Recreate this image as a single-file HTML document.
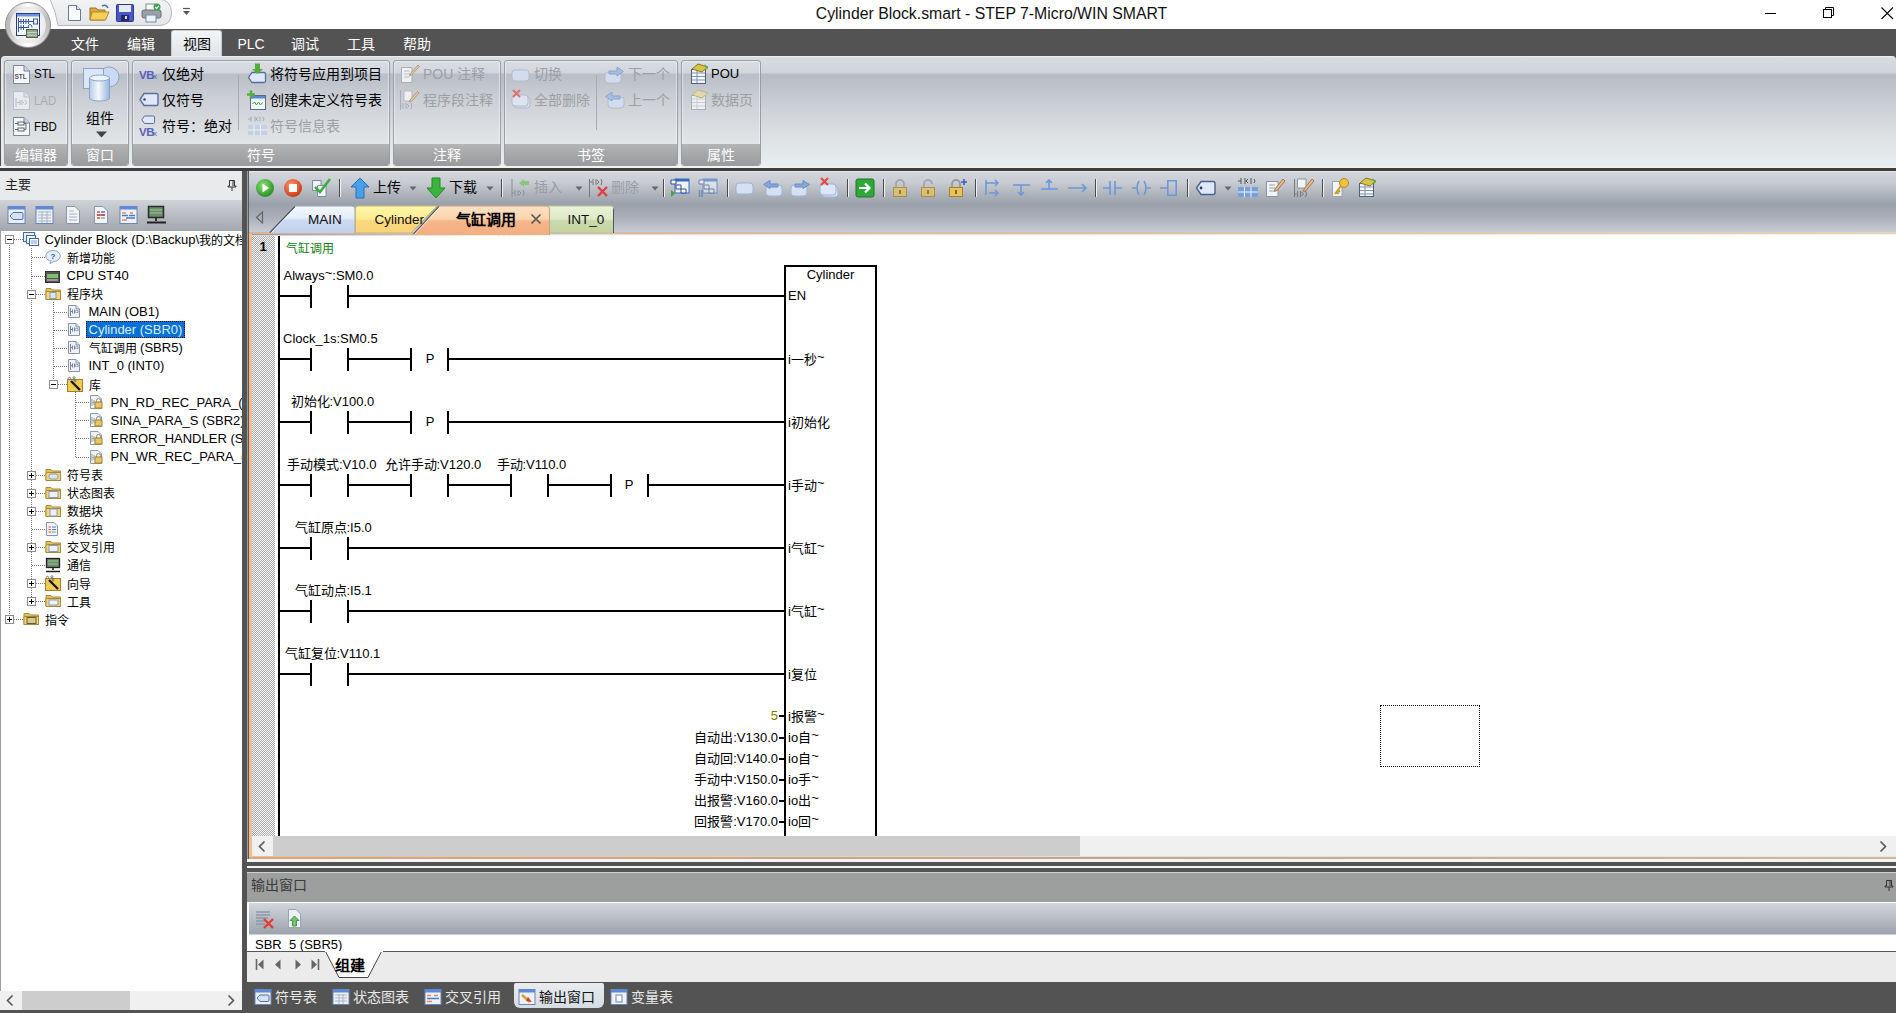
<!DOCTYPE html>
<html lang="zh-CN"><head><meta charset="utf-8"><title>STEP 7-Micro/WIN SMART</title>
<style>
html,body{margin:0;padding:0;width:1896px;height:1013px;overflow:hidden;background:#fff;}
body{position:relative;font-family:"Liberation Sans",sans-serif;}
.t{position:absolute;white-space:nowrap;}
.ls{font-family:"Liberation Sans",sans-serif;}
</style></head><body>
<div style="position:absolute;left:0px;top:0px;width:1896px;height:29px;background:#fff"></div>
<div class="t ls" style="left:691.5px;top:2.5px;width:600px;text-align:center;line-height:22px;font-size:15.8px;color:#111;">Cylinder Block.smart - STEP 7-Micro/WIN SMART</div>
<div style="position:absolute;left:1765px;top:13px;width:11px;height:1px;background:#000"></div>
<svg style="position:absolute;left:1823px;top:7px" width="12" height="12" viewBox="0 0 12 12"><rect x="0.5" y="2.5" width="8" height="8" fill="none" stroke="#000"/><path d="M2.5 2.5V0.5H10.5V8.5H8.5" fill="none" stroke="#000"/></svg>
<svg style="position:absolute;left:1881px;top:7px" width="13" height="13" viewBox="0 0 13 13"><path d="M0.5 0.5L12 12M12 0.5L0.5 12" stroke="#000" stroke-width="1.1"/></svg>
<div style="position:absolute;left:0px;top:29px;width:1896px;height:27px;background:#535353"></div>
<div style="position:absolute;left:171px;top:30px;width:51px;height:27px;border-radius:3px 3px 0 0;background:linear-gradient(#f3f5f7,#dfe3e7);border:1px solid #c9ccd0;border-bottom:none;box-sizing:border-box"></div>
<div class="t ls" style="left:55.0px;top:34.5px;width:60px;text-align:center;line-height:19px;font-size:14px;color:#fff;">文件</div>
<div class="t ls" style="left:111.0px;top:34.5px;width:60px;text-align:center;line-height:19px;font-size:14px;color:#fff;">编辑</div>
<div class="t ls" style="left:167.0px;top:34.5px;width:60px;text-align:center;line-height:19px;font-size:14px;color:#000;">视图</div>
<div class="t ls" style="left:221.0px;top:34.5px;width:60px;text-align:center;line-height:19px;font-size:14px;color:#fff;">PLC</div>
<div class="t ls" style="left:275.0px;top:34.5px;width:60px;text-align:center;line-height:19px;font-size:14px;color:#fff;">调试</div>
<div class="t ls" style="left:331.0px;top:34.5px;width:60px;text-align:center;line-height:19px;font-size:14px;color:#fff;">工具</div>
<div class="t ls" style="left:387.0px;top:34.5px;width:60px;text-align:center;line-height:19px;font-size:14px;color:#fff;">帮助</div>
<div style="position:absolute;left:0px;top:56px;width:1896px;height:112px;background:#535353"></div>
<div style="position:absolute;left:1px;top:56px;width:1895px;height:112px;box-sizing:border-box;border-radius:4px 4px 0 0;border-top:1px solid #eceef0;border-left:2px solid #e6e8ea;background:linear-gradient(#d9dce1 0px,#d0d4da 16px,#b5bac4 17px,#c9cdd3 45px,#dcdfe1 75px,#e8eef0 110px)"></div>
<div style="position:absolute;left:0px;top:166px;width:1896px;height:2px;background:#f0f2f3"></div>
<div style="position:absolute;left:0px;top:168px;width:1896px;height:3px;background:#3f3f3f"></div>
<div style="position:absolute;left:0px;top:171px;width:1896px;height:1px;background:#8d8f92"></div>
<div style="position:absolute;left:4px;top:60px;width:64px;height:106px;box-sizing:border-box;border:1px solid #9a9da3;border-radius:3px;background:linear-gradient(#dadde2 0px,#d2d6dc 12px,#b9bec7 13px,#cdd1d6 40px,#e3e6e8 84px);box-shadow:inset 0 0 0 1px rgba(255,255,255,.45)"></div>
<div style="position:absolute;left:5px;top:144px;width:62px;height:21px;border-radius:0 0 2px 2px;background:linear-gradient(#b2b4b6,#999b9d)"></div>
<div class="t ls" style="left:-24.0px;top:145.5px;width:120px;text-align:center;line-height:19px;font-size:14px;color:#fff;">编辑器</div>
<div style="position:absolute;left:71px;top:60px;width:58px;height:106px;box-sizing:border-box;border:1px solid #9a9da3;border-radius:3px;background:linear-gradient(#dadde2 0px,#d2d6dc 12px,#b9bec7 13px,#cdd1d6 40px,#e3e6e8 84px);box-shadow:inset 0 0 0 1px rgba(255,255,255,.45)"></div>
<div style="position:absolute;left:72px;top:144px;width:56px;height:21px;border-radius:0 0 2px 2px;background:linear-gradient(#b2b4b6,#999b9d)"></div>
<div class="t ls" style="left:40.0px;top:145.5px;width:120px;text-align:center;line-height:19px;font-size:14px;color:#fff;">窗口</div>
<div style="position:absolute;left:132px;top:60px;width:258px;height:106px;box-sizing:border-box;border:1px solid #9a9da3;border-radius:3px;background:linear-gradient(#dadde2 0px,#d2d6dc 12px,#b9bec7 13px,#cdd1d6 40px,#e3e6e8 84px);box-shadow:inset 0 0 0 1px rgba(255,255,255,.45)"></div>
<div style="position:absolute;left:133px;top:144px;width:256px;height:21px;border-radius:0 0 2px 2px;background:linear-gradient(#b2b4b6,#999b9d)"></div>
<div class="t ls" style="left:201.0px;top:145.5px;width:120px;text-align:center;line-height:19px;font-size:14px;color:#fff;">符号</div>
<div style="position:absolute;left:393px;top:60px;width:108px;height:106px;box-sizing:border-box;border:1px solid #9a9da3;border-radius:3px;background:linear-gradient(#dadde2 0px,#d2d6dc 12px,#b9bec7 13px,#cdd1d6 40px,#e3e6e8 84px);box-shadow:inset 0 0 0 1px rgba(255,255,255,.45)"></div>
<div style="position:absolute;left:394px;top:144px;width:106px;height:21px;border-radius:0 0 2px 2px;background:linear-gradient(#b2b4b6,#999b9d)"></div>
<div class="t ls" style="left:387.0px;top:145.5px;width:120px;text-align:center;line-height:19px;font-size:14px;color:#fff;">注释</div>
<div style="position:absolute;left:504px;top:60px;width:174px;height:106px;box-sizing:border-box;border:1px solid #9a9da3;border-radius:3px;background:linear-gradient(#dadde2 0px,#d2d6dc 12px,#b9bec7 13px,#cdd1d6 40px,#e3e6e8 84px);box-shadow:inset 0 0 0 1px rgba(255,255,255,.45)"></div>
<div style="position:absolute;left:505px;top:144px;width:172px;height:21px;border-radius:0 0 2px 2px;background:linear-gradient(#b2b4b6,#999b9d)"></div>
<div class="t ls" style="left:531.0px;top:145.5px;width:120px;text-align:center;line-height:19px;font-size:14px;color:#fff;">书签</div>
<div style="position:absolute;left:681px;top:60px;width:80px;height:106px;box-sizing:border-box;border:1px solid #9a9da3;border-radius:3px;background:linear-gradient(#dadde2 0px,#d2d6dc 12px,#b9bec7 13px,#cdd1d6 40px,#e3e6e8 84px);box-shadow:inset 0 0 0 1px rgba(255,255,255,.45)"></div>
<div style="position:absolute;left:682px;top:144px;width:78px;height:21px;border-radius:0 0 2px 2px;background:linear-gradient(#b2b4b6,#999b9d)"></div>
<div class="t ls" style="left:661.0px;top:145.5px;width:120px;text-align:center;line-height:19px;font-size:14px;color:#fff;">属性</div>
<div class="t ls" style="left:34px;top:65.0px;line-height:18px;font-size:13px;color:#000;transform:scaleX(0.88);transform-origin:0 50%">STL</div>
<div class="t ls" style="left:34px;top:91.5px;line-height:18px;font-size:13px;color:#a9acb1;transform:scaleX(0.88);transform-origin:0 50%">LAD</div>
<div class="t ls" style="left:34px;top:117.5px;line-height:18px;font-size:13px;color:#000;transform:scaleX(0.88);transform-origin:0 50%">FBD</div>
<div class="t ls" style="left:70.0px;top:108.5px;width:60px;text-align:center;line-height:19px;font-size:14px;color:#000;">组件</div>
<svg style="position:absolute;left:96px;top:131px" width="12" height="7" viewBox="0 0 12 7"><path d="M0 0.5H11L5.5 6.5Z" fill="#444"/></svg>
<div class="t ls" style="left:162px;top:64.5px;line-height:19px;font-size:14px;color:#000;">仅绝对</div>
<div class="t ls" style="left:162px;top:91.0px;line-height:19px;font-size:14px;color:#000;">仅符号</div>
<div class="t ls" style="left:162px;top:116.5px;line-height:19px;font-size:14px;color:#000;">符号：绝对</div>
<div style="position:absolute;left:238px;top:75px;width:1px;height:55px;background:#a8acb2"></div>
<div class="t ls" style="left:270px;top:64.5px;line-height:19px;font-size:14px;color:#000;">将符号应用到项目</div>
<div class="t ls" style="left:270px;top:91.0px;line-height:19px;font-size:14px;color:#000;">创建未定义符号表</div>
<div class="t ls" style="left:270px;top:116.5px;line-height:19px;font-size:14px;color:#9c9fa4;">符号信息表</div>
<div class="t ls" style="left:423px;top:64.5px;line-height:19px;font-size:14px;color:#9c9fa4;">POU 注释</div>
<div class="t ls" style="left:423px;top:91.0px;line-height:19px;font-size:14px;color:#9c9fa4;">程序段注释</div>
<div class="t ls" style="left:534px;top:64.5px;line-height:19px;font-size:14px;color:#9c9fa4;">切换</div>
<div class="t ls" style="left:534px;top:90.5px;line-height:19px;font-size:14px;color:#9c9fa4;">全部删除</div>
<div style="position:absolute;left:596px;top:75px;width:1px;height:55px;background:#a8acb2"></div>
<div class="t ls" style="left:628px;top:64.5px;line-height:19px;font-size:14px;color:#9c9fa4;">下一个</div>
<div class="t ls" style="left:628px;top:90.5px;line-height:19px;font-size:14px;color:#9c9fa4;">上一个</div>
<div class="t ls" style="left:711px;top:65.0px;line-height:18px;font-size:13px;color:#000;">POU</div>
<div class="t ls" style="left:711px;top:90.5px;line-height:19px;font-size:14px;color:#9c9fa4;">数据页</div>
<div style="position:absolute;left:0px;top:171px;width:242px;height:842px;background:#fff"></div>
<div style="position:absolute;left:0px;top:171px;width:242px;height:29px;background:#e9eaeb"></div>
<div class="t ls" style="left:5px;top:176.0px;line-height:18px;font-size:13px;color:#222;">主要</div>
<div style="position:absolute;left:0px;top:200px;width:242px;height:31px;background:linear-gradient(#cfd2d7,#a3a7ae)"></div>
<div style="position:absolute;left:242px;top:171px;width:5px;height:842px;background:#535353"></div>
<div style="position:absolute;left:0px;top:991px;width:242px;height:19px;background:#f0f0f0"></div>
<div style="position:absolute;left:22px;top:991px;width:108px;height:19px;background:#cdcdcd"></div>
<div style="position:absolute;left:0px;top:1010px;width:247px;height:3px;background:#535353"></div>
<div style="position:absolute;left:247px;top:171px;width:1649px;height:2px;background:#e8e8e8"></div>
<div style="position:absolute;left:249px;top:172px;width:1647px;height:60px;background:linear-gradient(#d2d5da 0px,#c9ccd2 10px,#9aa1aa 32px,#a9aeb7 45px,#c9ccd4 60px)"></div>
<div style="position:absolute;left:249px;top:232px;width:1647px;height:627px;background:linear-gradient(to right,#f1bd8e 0%,#eec9a6 25%,#efdcbf 50%,#f2e6c9 100%)"></div>
<div style="position:absolute;left:249px;top:232px;width:1647px;height:2px;background:linear-gradient(to right,#d9b396,#dcc0a2 50%,#e2d4b6)"></div>
<div style="position:absolute;left:249px;top:857px;width:1647px;height:2px;background:linear-gradient(to right,#d2a888,#bca890 50%,#c8bca4)"></div>
<div style="position:absolute;left:247px;top:171px;width:1px;height:688px;background:#9a9ea3"></div>
<div style="position:absolute;left:248px;top:171px;width:1px;height:688px;background:#5a5a5a"></div>
<div style="position:absolute;left:252px;top:234px;width:1644px;height:602px;background:#fff"></div>
<div style="position:absolute;left:252px;top:234px;width:1644px;height:1px;background:linear-gradient(to right,#9c9c9c,#e0e0e0 300px,#f4f4f4)"></div>
<div style="position:absolute;left:252px;top:235px;width:1644px;height:1px;background:linear-gradient(to right,#d4d4d4,#f4f4f4 300px,#fff)"></div>
<div style="position:absolute;left:252px;top:836px;width:1644px;height:20px;background:#f0f0f0"></div>
<div style="position:absolute;left:273px;top:836px;width:807px;height:20px;background:#cdcdcd"></div>
<div style="position:absolute;left:247px;top:859px;width:1649px;height:3px;background:#f4f4f4"></div>
<div style="position:absolute;left:247px;top:862px;width:1649px;height:4px;background:#535353"></div>
<div style="position:absolute;left:247px;top:866px;width:1649px;height:2px;background:#f4f4f4"></div>
<div style="position:absolute;left:247px;top:868px;width:1649px;height:4px;background:#535353"></div>
<div style="position:absolute;left:247px;top:872px;width:1649px;height:30px;background:#9d9f9e;border-top:1px solid #cfcfcf;box-sizing:border-box"></div>
<div class="t ls" style="left:251px;top:876.0px;line-height:19px;font-size:14px;color:#3a3a3a;">输出窗口</div>
<div style="position:absolute;left:249px;top:903px;width:1647px;height:32px;background:linear-gradient(#d3d6db,#9ba2ac)"></div>
<div style="position:absolute;left:249px;top:935px;width:1647px;height:16px;background:#fff"></div>
<div class="t ls" style="left:255px;top:935.6px;line-height:18px;font-size:13px;color:#000;">SBR_5 (SBR5)</div>
<div style="position:absolute;left:247px;top:951px;width:1649px;height:31px;background:#ebebeb"></div>
<div style="position:absolute;left:247px;top:951px;width:1649px;height:1px;background:#6a6a6a"></div>
<div style="position:absolute;left:247px;top:982px;width:1649px;height:31px;background:#535353"></div>
<svg style="position:absolute;left:46px;top:0px" width="132" height="28" viewBox="0 0 132 28"><defs><linearGradient id="qg" x1="0" y1="0" x2="0" y2="1"><stop offset="0" stop-color="#f3f4f6"/><stop offset="1" stop-color="#e3e5e8"/></linearGradient></defs><path d="M4 -1 Q10 12 12 25.5 H113 Q125.5 25.5 125.5 13 Q125.5 0 113 -1Z" fill="url(#qg)" stroke="#b5b8bd"/></svg>
<div style="position:absolute;left:5px;top:2px;width:46px;height:46px;box-sizing:border-box;border-radius:50%;border:1px solid #8f9092;background:conic-gradient(#ffffff 0deg,#bdbdbe 70deg,#c4c4c5 110deg,#ffffff 180deg,#c0c0c1 250deg,#bcbcbd 290deg,#ffffff 360deg)"></div>
<div style="position:absolute;left:10px;top:7px;width:36px;height:36px;border-radius:50%;background:radial-gradient(circle at 50% 50%,#fbfbfb 0%,#f1f1f2 55%,#d9d9da 100%)"></div>
<svg style="position:absolute;left:15px;top:12px" width="26" height="26" viewBox="0 0 26 26"><rect x="1.5" y="1.5" width="23" height="22" fill="#f6f8fd" stroke="#1f3f8a"/><rect x="2" y="2" width="22" height="2.5" fill="#6f93dc"/><path d="M3.5 6V20M3.5 9.5H19M6 7V12M8.5 7V12M11 7V12M13.5 7V12M3.5 15.5H14M6 13V18M8.5 13V18" stroke="#3556a8" stroke-width="1" fill="none"/><rect x="18.5" y="7" width="4" height="5" fill="none" stroke="#3556a8"/><path d="M13 15.5Q13 12.5 15 12.5Q17 12.5 17 15.5" fill="none" stroke="#3556a8"/><rect x="11.5" y="17.5" width="11" height="8" fill="#8fa88a" stroke="#55614f"/><path d="M12 20.5H22M12 23H22" stroke="#c5d8bd"/></svg>
<svg style="position:absolute;left:67px;top:4px" width="15" height="18" viewBox="0 0 15 18"><path d="M1.5 1.5H9.5L13.5 5.5V16.5H1.5Z" fill="#fafbfd" stroke="#6b7891"/><path d="M9.5 1.5V5.5H13.5" fill="#d9e2f0" stroke="#6b7891"/></svg>
<svg style="position:absolute;left:89px;top:3px" width="21" height="19" viewBox="0 0 21 19"><path d="M1 5H7L9 7H16V17H1Z" fill="#d9a93a" stroke="#9b7420"/><path d="M3 9H20L16.5 17H1Z" fill="#f6cf58" stroke="#b38a22"/><path d="M13 3Q17 1 19 5" stroke="#4a72b8" stroke-width="1.5" fill="none"/></svg>
<svg style="position:absolute;left:116px;top:4px" width="18" height="18" viewBox="0 0 18 18"><rect x="0.5" y="0.5" width="17" height="17" rx="1" fill="#4a56c4" stroke="#2f3a8c"/><rect x="3" y="1" width="12" height="7" fill="#e6e9f7"/><rect x="5" y="11" width="8" height="6" fill="#222a66"/><rect x="9" y="12" width="2" height="3" fill="#ddd"/></svg>
<svg style="position:absolute;left:141px;top:3px" width="21" height="20" viewBox="0 0 21 20"><rect x="5" y="1" width="9" height="7" fill="#f8f8f8" stroke="#8a8a8a"/><rect x="1" y="7" width="19" height="8" rx="2" fill="#9aa0a8" stroke="#6a6e74"/><rect x="5" y="12" width="10" height="7" fill="#eef3fa" stroke="#7a8aa0"/><circle cx="16" cy="4" r="3.5" fill="#3aa646"/><path d="M14.2 4L15.6 5.4L18 2.8" stroke="#fff" stroke-width="1.2" fill="none"/></svg>
<svg style="position:absolute;left:182px;top:7px" width="9" height="10" viewBox="0 0 9 10"><path d="M1 1.5H8" stroke="#555" stroke-width="1.2"/><path d="M1 4H8L4.5 8Z" fill="#555"/></svg>
<svg style="position:absolute;left:12px;top:64px" width="19" height="21" viewBox="0 0 19 21"><path d="M1.5 1.5H12L17.5 7V19.5H1.5Z" fill="#f4f6f9" stroke="#7b8699"/><path d="M12 1.5V7H17.5" fill="#c7d3e8" stroke="#7b8699"/><text x="2.5" y="15" font-size="6.5" font-family="Liberation Sans" font-weight="bold" fill="#555">STL</text></svg>
<svg style="position:absolute;left:12px;top:90px" width="19" height="21" viewBox="0 0 19 21"><path d="M1.5 1.5H12L17.5 7V19.5H1.5Z" fill="#e9ebee" stroke="#b9bec6"/><path d="M12 1.5V7H17.5" fill="#dde3ec" stroke="#b9bec6"/><path d="M4 8V17M5 12.5H7M8 10V15M10 10V15M11 12.5H12M13 10L14.5 12.5L13 15" stroke="#b3b7bd" fill="none"/></svg>
<svg style="position:absolute;left:12px;top:116px" width="19" height="21" viewBox="0 0 19 21"><path d="M1.5 1.5H12L17.5 7V19.5H1.5Z" fill="#f4f6f9" stroke="#7b8699"/><path d="M12 1.5V7H17.5" fill="#c7d3e8" stroke="#7b8699"/><rect x="6" y="6" width="6" height="3" fill="none" stroke="#666"/><rect x="6" y="12" width="6" height="3" fill="none" stroke="#666"/><path d="M3 7.5H6M12 7.5H14V13.5H12M3 13.5H6" stroke="#666" fill="none"/></svg>
<svg style="position:absolute;left:82px;top:64px" width="38" height="39" viewBox="0 0 38 39"><defs><linearGradient id="cyl" x1="0" y1="0" x2="1" y2="0"><stop offset="0" stop-color="#b7cbe8"/><stop offset=".45" stop-color="#f4f8fd"/><stop offset="1" stop-color="#9ab4dc"/></linearGradient></defs><circle cx="27" cy="13" r="10" fill="#c9dbf3" stroke="#8ca3c8"/><rect x="1.5" y="4.5" width="20" height="20" fill="#dbe6f6" stroke="#8ca3c8"/><path d="M7.5 14V34A10 3 0 0 0 27.5 34V14" fill="url(#cyl)" stroke="#8ca3c8"/><ellipse cx="17.5" cy="14" rx="10" ry="3" fill="#eef4fc" stroke="#8ca3c8"/></svg>
<svg style="position:absolute;left:139px;top:68px" width="20" height="13" viewBox="0 0 20 13"><text x="0" y="11" font-size="11.5" font-family="Liberation Sans" font-weight="bold" fill="#5a60b8" letter-spacing="-0.5">VB</text><text x="14" y="11" font-size="8" font-family="Liberation Sans" fill="#5a60b8">x</text></svg>
<svg style="position:absolute;left:139px;top:92px" width="20" height="15" viewBox="0 0 20 15"><path d="M5 1.5H17.5Q19 1.5 19 3V12Q19 13.5 17.5 13.5H5L1 7.5Z" fill="#dfe8f8" stroke="#5a6d9e" stroke-width="1.4"/><circle cx="5.5" cy="7.5" r="1.3" fill="#34446e"/></svg>
<svg style="position:absolute;left:141px;top:115px" width="14" height="10" viewBox="0 0 14 10"><path d="M3.5 1H12.5Q13.5 1 13.5 2V7Q13.5 8.5 12.5 8.5H3.5L0.8 4.8Z" fill="#dfe8f8" stroke="#5a6d9e"/></svg>
<svg style="position:absolute;left:139px;top:125px" width="20" height="13" viewBox="0 0 20 13"><text x="0" y="11" font-size="11.5" font-family="Liberation Sans" font-weight="bold" fill="#5a60b8" letter-spacing="-0.5">VB</text><text x="14" y="11" font-size="8" font-family="Liberation Sans" fill="#5a60b8">x</text></svg>
<svg style="position:absolute;left:247px;top:63px" width="20" height="21" viewBox="0 0 20 21"><path d="M5 9.5H17Q18.5 9.5 18.5 11V18Q18.5 19.5 17 19.5H5L1.5 14.5Z" fill="#dfe8f8" stroke="#5a6d9e" stroke-width="1.3"/><path d="M8 0.5H13V6H16L10.5 11L5 6H8Z" fill="#4fae3c"/></svg>
<svg style="position:absolute;left:247px;top:90px" width="20" height="21" viewBox="0 0 20 21"><rect x="3.5" y="5.5" width="15" height="14" fill="#f3f6fb" stroke="#5b6b86"/><rect x="4" y="6" width="14" height="2.5" fill="#5c86d4"/><path d="M5.5 14L7.5 12L9.5 15L11.5 12L13.5 15L15.5 12.5" stroke="#3aa33a" fill="none"/><path d="M4 0.5V8.5M0 4.5H8" stroke="#55b040" stroke-width="2.6"/></svg>
<svg style="position:absolute;left:247px;top:116px" width="21" height="20" viewBox="0 0 21 20"><path d="M1 3H4M4 0.5V5.5M8 0.5V5.5M9 3L11 1M9 3L11 5M13 0.5V5.5M16 1Q18 3 16 5" stroke="#a3a8b0" fill="none"/><rect x="1" y="9" width="19" height="10" fill="#c4d0e4"/><path d="M1 14H20M7 9V19M13.5 9V19" stroke="#eef2f8"/></svg>
<svg style="position:absolute;left:400px;top:63px" width="20" height="21" viewBox="0 0 20 21"><path d="M1.5 4.5H12V19.5H1.5Z" fill="#eef0f3" stroke="#a9aeb7"/><path d="M4 8H10M4 11H10M4 14H9" stroke="#b9bec6"/><path d="M10 11L18 2L19.5 3.5L11.5 12L9.5 13Z" fill="#e3c9a8" stroke="#b49a80"/></svg>
<svg style="position:absolute;left:399px;top:89px" width="21" height="22" viewBox="0 0 21 22"><path d="M1.5 1V21M1.5 17H3M4 14V20M7 14V20M8 15L10 17L8 19M12 14Q14 17 12 20" stroke="#a9aeb7" fill="none"/><path d="M5 2H13V12H5Z" fill="#eef0f3" stroke="#b4b9c1"/><path d="M11 11L18.5 2.5L20 4L12.5 12.5L10.5 13Z" fill="#e3c9a8" stroke="#b49a80"/></svg>
<svg style="position:absolute;left:511px;top:67px" width="20" height="16" viewBox="0 0 20 16"><rect x="1" y="3" width="17" height="11" rx="3" fill="#d3dcec" stroke="#b1bccf"/></svg>
<svg style="position:absolute;left:511px;top:89px" width="21" height="21" viewBox="0 0 21 21"><rect x="3" y="8" width="16" height="11" rx="3" fill="#d3dcec" stroke="#b1bccf"/><rect x="1" y="6" width="16" height="11" rx="3" fill="#dbe3f0" stroke="#b1bccf"/><path d="M2 1L9 8M9 1L2 8" stroke="#e3706a" stroke-width="2"/></svg>
<svg style="position:absolute;left:604px;top:65px" width="21" height="19" viewBox="0 0 21 19"><rect x="1" y="7" width="16" height="11" rx="3" fill="#d3dcec" stroke="#b1bccf"/><path d="M5 6H13V2L19.5 6.5L13 11V9H5Z" fill="#a8bde0" stroke="#8aa3cf"/></svg>
<svg style="position:absolute;left:604px;top:90px" width="21" height="19" viewBox="0 0 21 19"><rect x="4" y="7" width="16" height="11" rx="3" fill="#d3dcec" stroke="#b1bccf"/><path d="M16 6H8V2L1.5 6.5L8 11V9H16Z" fill="#a8bde0" stroke="#8aa3cf"/></svg>
<svg style="position:absolute;left:689px;top:63px" width="20" height="21" viewBox="0 0 20 21"><rect x="2.5" y="6.5" width="14" height="14" fill="#f4f6fa" stroke="#51607a"/><path d="M3 10H16M3 13.5H16M3 17H16M8 7V20" stroke="#7f93b8"/><path d="M3 6L9 1L19 4L13 9Z" fill="#d9c24a" stroke="#8d7a22"/><path d="M15 1L19 4L18 7" fill="#4caf50"/></svg>
<svg style="position:absolute;left:689px;top:89px" width="20" height="21" viewBox="0 0 20 21"><rect x="2.5" y="6.5" width="14" height="14" fill="#eef0f4" stroke="#a8b0be"/><path d="M3 10H16M3 13.5H16M3 17H16M8 7V20" stroke="#c4ccda"/><path d="M3 6L9 1L19 4L13 9Z" fill="#e3d9a8" stroke="#bcb286"/></svg>
<svg style="position:absolute;left:7px;top:205px" width="19" height="20" viewBox="0 0 19 20"><rect x="1" y="1.5" width="17" height="17" fill="#e9f0fb" stroke="#6c84b4"/><rect x="1" y="1.5" width="17" height="3" fill="#5d8ad8"/><path d="M6 7.5H15Q16 7.5 16 8.5V13Q16 14.5 15 14.5H6L3 11Z" fill="#d3e0f5" stroke="#5a6d9e"/></svg>
<svg style="position:absolute;left:35px;top:205px" width="19" height="20" viewBox="0 0 19 20"><rect x="1" y="1.5" width="17" height="17" fill="#eef2f8" stroke="#6c84b4"/><rect x="1" y="1.5" width="17" height="3" fill="#5d8ad8"/><path d="M3 7H16M3 10H16M3 13H16M3 16H16M7 6V18M12 6V18" stroke="#a9b4c6"/></svg>
<svg style="position:absolute;left:65px;top:205px" width="16" height="20" viewBox="0 0 16 20"><path d="M1.5 1.5H10L14.5 6V18.5H1.5Z" fill="#f2f4f8" stroke="#8794aa"/><path d="M4 6H9M4 9H12M4 12H12M4 15H12" stroke="#a8b1c0" stroke-width="1.2"/></svg>
<svg style="position:absolute;left:93px;top:205px" width="16" height="20" viewBox="0 0 16 20"><path d="M1.5 1.5H10L14.5 6V18.5H1.5Z" fill="#f2f4f8" stroke="#8794aa"/><path d="M4 7H7M4 10H7M4 13H7" stroke="#e05050" stroke-width="1.3"/><path d="M8 7H12M8 10H12" stroke="#4a78d0" stroke-width="1.3"/><path d="M8 13H12" stroke="#7ab04a" stroke-width="1.3"/><path d="M4 10H12" stroke="#d04040" stroke-width="1.3"/></svg>
<svg style="position:absolute;left:119px;top:205px" width="19" height="20" viewBox="0 0 19 20"><rect x="1" y="1.5" width="17" height="17" fill="#eef2f8" stroke="#6c84b4"/><rect x="1" y="1.5" width="17" height="3" fill="#5d8ad8"/><path d="M3 8H7M11 8H14M3 15H8" stroke="#e88a50" stroke-width="1.6"/><path d="M3 10.5H9M10 10.5H16M7 13H16" stroke="#4a78d0" stroke-width="1.6"/></svg>
<svg style="position:absolute;left:146px;top:205px" width="21" height="20" viewBox="0 0 21 20"><rect x="2.5" y="1.5" width="15" height="11" fill="#6c8c6a" stroke="#2a2a2a" stroke-width="1.5"/><path d="M4 5H16M4 8H16" stroke="#9cc494"/><path d="M10 13V16M1 17.5H20" stroke="#222" stroke-width="1.8"/></svg>
<div style="position:absolute;left:0px;top:231px;width:1px;height:760px;background:#a0a0a0"></div>
<div style="position:absolute;left:9px;top:245px;width:1px;height:374.395px;background:repeating-linear-gradient(to bottom,#7a7a7a 0 1px,transparent 1px 2px)"></div>
<div style="position:absolute;left:31px;top:248px;width:1px;height:354.29999999999995px;background:repeating-linear-gradient(to bottom,#7a7a7a 0 1px,transparent 1px 2px)"></div>
<div style="position:absolute;left:53px;top:302px;width:1px;height:78.15999999999997px;background:repeating-linear-gradient(to bottom,#7a7a7a 0 1px,transparent 1px 2px)"></div>
<div style="position:absolute;left:75px;top:392px;width:1px;height:65.53999999999996px;background:repeating-linear-gradient(to bottom,#7a7a7a 0 1px,transparent 1px 2px)"></div>
<div style="position:absolute;left:0;top:231px;width:242px;height:760px;overflow:hidden">
<div style="position:absolute;left:10px;top:8px;width:13px;height:1px;background:repeating-linear-gradient(to right,#7a7a7a 0 1px,transparent 1px 2px)"></div>
<svg style="position:absolute;left:5px;top:4px" width="9" height="9"><rect x="0.5" y="0.5" width="8" height="8" fill="#fff" stroke="#8c8c8c"/><path d="M2 4.5H7" stroke="#000"/></svg>
<svg style="position:absolute;left:23px;top:0px" width="17" height="17"><rect x="0.5" y="1.5" width="11" height="9" fill="#eaf0fa" stroke="#3f66b0"/><rect x="3.5" y="4.5" width="9" height="8" fill="#f3f6fc" stroke="#3f66b0"/><rect x="6.5" y="7.5" width="9" height="7" fill="#fff" stroke="#3f66b0"/><path d="M8 10H14M8 12H14" stroke="#7b9ad0"/></svg>
<div class="t" style="left:44.5px;top:-0.24999999999999467px;line-height:18px;font-size:13px;color:#000">Cylinder Block (D:\Backup\<span style="font-size:12px;position:relative;top:1px">我的文档</span>\Cylinder</div>
<div style="position:absolute;left:32px;top:26px;width:13px;height:1px;background:repeating-linear-gradient(to right,#7a7a7a 0 1px,transparent 1px 2px)"></div>
<svg style="position:absolute;left:45px;top:18px" width="17" height="17"><ellipse cx="8" cy="7" rx="7.3" ry="5.5" fill="#e4eefa" stroke="#8ea6c8"/><path d="M6 11.5L5 15L9 12" fill="#e4eefa" stroke="#8ea6c8"/><text x="5.5" y="10" font-size="8" font-weight="bold" font-family="Liberation Sans" fill="#2f4f9f">?</text></svg>
<div class="t" style="left:66.5px;top:17.845000000000006px;line-height:18px;font-size:13px;color:#000"><span style="font-size:12px;position:relative;top:1px">新增功能</span></div>
<div style="position:absolute;left:32px;top:45px;width:13px;height:1px;background:repeating-linear-gradient(to right,#7a7a7a 0 1px,transparent 1px 2px)"></div>
<svg style="position:absolute;left:45px;top:37px" width="17" height="17"><rect x="0.5" y="3.5" width="14" height="11" fill="#555" stroke="#333"/><rect x="2" y="6" width="11" height="4" fill="#7cbf6c"/><rect x="2" y="11" width="11" height="2" fill="#999"/></svg>
<div class="t" style="left:66.5px;top:35.94000000000003px;line-height:18px;font-size:13px;color:#000">CPU ST40</div>
<div style="position:absolute;left:32px;top:63px;width:13px;height:1px;background:repeating-linear-gradient(to right,#7a7a7a 0 1px,transparent 1px 2px)"></div>
<svg style="position:absolute;left:27px;top:59px" width="9" height="9"><rect x="0.5" y="0.5" width="8" height="8" fill="#fff" stroke="#8c8c8c"/><path d="M2 4.5H7" stroke="#000"/></svg>
<svg style="position:absolute;left:45px;top:55px" width="17" height="17"><path d="M1 2.5H6L7.5 4H15.5V13.5H1Z" fill="#e7c25a" stroke="#a58a3a"/><path d="M1 5.5H15.5V13.5H1Z" fill="#f3d77a" stroke="#a58a3a"/><rect x="5" y="6.5" width="6" height="6" fill="#dfe6f2" stroke="#8a9ab8"/></svg>
<div class="t" style="left:66.5px;top:54.035000000000004px;line-height:18px;font-size:13px;color:#000"><span style="font-size:12px;position:relative;top:1px">程序块</span></div>
<div style="position:absolute;left:54px;top:81px;width:13px;height:1px;background:repeating-linear-gradient(to right,#7a7a7a 0 1px,transparent 1px 2px)"></div>
<svg style="position:absolute;left:67px;top:73px" width="17" height="17"><path d="M1.5 1.5H9L12.5 5V13.5H1.5Z" fill="#eef2f8" stroke="#8794aa"/><path d="M9 1.5V5H12.5" fill="#d5deec" stroke="#8794aa"/><path d="M3.5 4V12M3.5 7.5H5M5.5 5.5V9.5M7.5 5.5V9.5M8 7.5L9.5 6M8 7.5L9.5 9M10.5 6Q11.5 7.5 10.5 9" stroke="#6a7890" fill="none" stroke-width="0.9"/></svg>
<div class="t" style="left:88.5px;top:72.12999999999997px;line-height:18px;font-size:13px;color:#000">MAIN (OB1)</div>
<div style="position:absolute;left:54px;top:99px;width:13px;height:1px;background:repeating-linear-gradient(to right,#7a7a7a 0 1px,transparent 1px 2px)"></div>
<svg style="position:absolute;left:67px;top:91px" width="17" height="17"><path d="M1.5 1.5H9L12.5 5V13.5H1.5Z" fill="#eef2f8" stroke="#8794aa"/><path d="M9 1.5V5H12.5" fill="#d5deec" stroke="#8794aa"/><path d="M3.5 4V12M3.5 7.5H5M5.5 5.5V9.5M7.5 5.5V9.5M8 7.5L9.5 6M8 7.5L9.5 9M10.5 6Q11.5 7.5 10.5 9" stroke="#6a7890" fill="none" stroke-width="0.9"/></svg>
<div style="position:absolute;left:86px;top:89.875px;width:99px;height:17.5px;background:#0a6fd6;outline:1px dotted #111;outline-offset:-1px"></div>
<div class="t" style="left:88.5px;top:90.225px;line-height:18px;font-size:13px;color:#d7f3ff">Cylinder (SBR0)</div>
<div style="position:absolute;left:54px;top:117px;width:13px;height:1px;background:repeating-linear-gradient(to right,#7a7a7a 0 1px,transparent 1px 2px)"></div>
<svg style="position:absolute;left:67px;top:109px" width="17" height="17"><path d="M1.5 1.5H9L12.5 5V13.5H1.5Z" fill="#eef2f8" stroke="#8794aa"/><path d="M9 1.5V5H12.5" fill="#d5deec" stroke="#8794aa"/><path d="M3.5 4V12M3.5 7.5H5M5.5 5.5V9.5M7.5 5.5V9.5M8 7.5L9.5 6M8 7.5L9.5 9M10.5 6Q11.5 7.5 10.5 9" stroke="#6a7890" fill="none" stroke-width="0.9"/></svg>
<div class="t" style="left:88.5px;top:108.32000000000002px;line-height:18px;font-size:13px;color:#000"><span style="font-size:12px;position:relative;top:1px">气缸调用</span> (SBR5)</div>
<div style="position:absolute;left:54px;top:135px;width:13px;height:1px;background:repeating-linear-gradient(to right,#7a7a7a 0 1px,transparent 1px 2px)"></div>
<svg style="position:absolute;left:67px;top:127px" width="17" height="17"><path d="M1.5 1.5H9L12.5 5V13.5H1.5Z" fill="#eef2f8" stroke="#8794aa"/><path d="M9 1.5V5H12.5" fill="#d5deec" stroke="#8794aa"/><path d="M3.5 4V12M3.5 7.5H5M5.5 5.5V9.5M7.5 5.5V9.5M8 7.5L9.5 6M8 7.5L9.5 9M10.5 6Q11.5 7.5 10.5 9" stroke="#6a7890" fill="none" stroke-width="0.9"/></svg>
<div class="t" style="left:88.5px;top:126.41499999999999px;line-height:18px;font-size:13px;color:#000">INT_0 (INT0)</div>
<div style="position:absolute;left:54px;top:153px;width:13px;height:1px;background:repeating-linear-gradient(to right,#7a7a7a 0 1px,transparent 1px 2px)"></div>
<svg style="position:absolute;left:49px;top:149px" width="9" height="9"><rect x="0.5" y="0.5" width="8" height="8" fill="#fff" stroke="#8c8c8c"/><path d="M2 4.5H7" stroke="#000"/></svg>
<svg style="position:absolute;left:67px;top:145px" width="17" height="17"><rect x="0.5" y="3.5" width="15" height="12" fill="#f1cc52" stroke="#a08030"/><path d="M4 5L13 14" stroke="#111" stroke-width="2.2"/><circle cx="2.5" cy="2.5" r="1.2" fill="#fff" stroke="#333" stroke-width=".6"/><circle cx="7" cy="1.8" r="1.1" fill="#fff" stroke="#333" stroke-width=".6"/><circle cx="8" cy="5" r="1" fill="#fff" stroke="#333" stroke-width=".6"/></svg>
<div class="t" style="left:88.5px;top:144.50999999999996px;line-height:18px;font-size:13px;color:#000"><span style="font-size:12px;position:relative;top:1px">库</span></div>
<div style="position:absolute;left:76px;top:171px;width:13px;height:1px;background:repeating-linear-gradient(to right,#7a7a7a 0 1px,transparent 1px 2px)"></div>
<svg style="position:absolute;left:89px;top:163px" width="17" height="17"><path d="M1.5 1.5H9L12.5 5V14.5H1.5Z" fill="#f1f3f6" stroke="#8e97a6"/><path d="M3 5V12M3 8.5H5M5 6V11" stroke="#9aa3b0"/><rect x="6" y="8" width="7" height="6" fill="#e8c760" stroke="#a08230"/><path d="M7.5 8V6.5A2 2 0 0 1 11.5 6.5V8" fill="none" stroke="#8a8a8a"/></svg>
<div class="t" style="left:110.5px;top:162.605px;line-height:18px;font-size:13px;color:#000">PN_RD_REC_PARA_(SBR3)</div>
<div style="position:absolute;left:76px;top:189px;width:13px;height:1px;background:repeating-linear-gradient(to right,#7a7a7a 0 1px,transparent 1px 2px)"></div>
<svg style="position:absolute;left:89px;top:181px" width="17" height="17"><path d="M1.5 1.5H9L12.5 5V14.5H1.5Z" fill="#f1f3f6" stroke="#8e97a6"/><path d="M3 5V12M3 8.5H5M5 6V11" stroke="#9aa3b0"/><rect x="6" y="8" width="7" height="6" fill="#e8c760" stroke="#a08230"/><path d="M7.5 8V6.5A2 2 0 0 1 11.5 6.5V8" fill="none" stroke="#8a8a8a"/></svg>
<div class="t" style="left:110.5px;top:180.70000000000002px;line-height:18px;font-size:13px;color:#000">SINA_PARA_S (SBR2)</div>
<div style="position:absolute;left:76px;top:207px;width:13px;height:1px;background:repeating-linear-gradient(to right,#7a7a7a 0 1px,transparent 1px 2px)"></div>
<svg style="position:absolute;left:89px;top:199px" width="17" height="17"><path d="M1.5 1.5H9L12.5 5V14.5H1.5Z" fill="#f1f3f6" stroke="#8e97a6"/><path d="M3 5V12M3 8.5H5M5 6V11" stroke="#9aa3b0"/><rect x="6" y="8" width="7" height="6" fill="#e8c760" stroke="#a08230"/><path d="M7.5 8V6.5A2 2 0 0 1 11.5 6.5V8" fill="none" stroke="#8a8a8a"/></svg>
<div class="t" style="left:110.5px;top:198.795px;line-height:18px;font-size:13px;color:#000">ERROR_HANDLER (SBR1)</div>
<div style="position:absolute;left:76px;top:226px;width:13px;height:1px;background:repeating-linear-gradient(to right,#7a7a7a 0 1px,transparent 1px 2px)"></div>
<svg style="position:absolute;left:89px;top:218px" width="17" height="17"><path d="M1.5 1.5H9L12.5 5V14.5H1.5Z" fill="#f1f3f6" stroke="#8e97a6"/><path d="M3 5V12M3 8.5H5M5 6V11" stroke="#9aa3b0"/><rect x="6" y="8" width="7" height="6" fill="#e8c760" stroke="#a08230"/><path d="M7.5 8V6.5A2 2 0 0 1 11.5 6.5V8" fill="none" stroke="#8a8a8a"/></svg>
<div class="t" style="left:110.5px;top:216.88999999999996px;line-height:18px;font-size:13px;color:#000">PN_WR_REC_PARA_(SBR4)</div>
<div style="position:absolute;left:32px;top:244px;width:13px;height:1px;background:repeating-linear-gradient(to right,#7a7a7a 0 1px,transparent 1px 2px)"></div>
<svg style="position:absolute;left:27px;top:240px" width="9" height="9"><rect x="0.5" y="0.5" width="8" height="8" fill="#fff" stroke="#8c8c8c"/><path d="M2 4.5H7" stroke="#000"/><path d="M4.5 2V7" stroke="#000"/></svg>
<svg style="position:absolute;left:45px;top:236px" width="17" height="17"><path d="M1 2.5H6L7.5 4H15.5V13.5H1Z" fill="#e7c25a" stroke="#a58a3a"/><path d="M1 5.5H15.5V13.5H1Z" fill="#f3d77a" stroke="#a58a3a"/><rect x="4" y="7" width="9" height="5" rx="2" fill="#dfe6f2" stroke="#8a9ab8"/></svg>
<div class="t" style="left:66.5px;top:234.98499999999999px;line-height:18px;font-size:13px;color:#000"><span style="font-size:12px;position:relative;top:1px">符号表</span></div>
<div style="position:absolute;left:32px;top:262px;width:13px;height:1px;background:repeating-linear-gradient(to right,#7a7a7a 0 1px,transparent 1px 2px)"></div>
<svg style="position:absolute;left:27px;top:258px" width="9" height="9"><rect x="0.5" y="0.5" width="8" height="8" fill="#fff" stroke="#8c8c8c"/><path d="M2 4.5H7" stroke="#000"/><path d="M4.5 2V7" stroke="#000"/></svg>
<svg style="position:absolute;left:45px;top:254px" width="17" height="17"><path d="M1 2.5H6L7.5 4H15.5V13.5H1Z" fill="#e7c25a" stroke="#a58a3a"/><path d="M1 5.5H15.5V13.5H1Z" fill="#f3d77a" stroke="#a58a3a"/><rect x="4" y="6.5" width="9" height="6" fill="#eef2f8" stroke="#8a9ab8"/></svg>
<div class="t" style="left:66.5px;top:253.08px;line-height:18px;font-size:13px;color:#000"><span style="font-size:12px;position:relative;top:1px">状态图表</span></div>
<div style="position:absolute;left:32px;top:280px;width:13px;height:1px;background:repeating-linear-gradient(to right,#7a7a7a 0 1px,transparent 1px 2px)"></div>
<svg style="position:absolute;left:27px;top:276px" width="9" height="9"><rect x="0.5" y="0.5" width="8" height="8" fill="#fff" stroke="#8c8c8c"/><path d="M2 4.5H7" stroke="#000"/><path d="M4.5 2V7" stroke="#000"/></svg>
<svg style="position:absolute;left:45px;top:272px" width="17" height="17"><path d="M1 2.5H6L7.5 4H15.5V13.5H1Z" fill="#e7c25a" stroke="#a58a3a"/><path d="M1 5.5H15.5V13.5H1Z" fill="#f3d77a" stroke="#a58a3a"/><rect x="5" y="6" width="7" height="7" fill="#eef2f8" stroke="#8a9ab8"/></svg>
<div class="t" style="left:66.5px;top:271.17499999999995px;line-height:18px;font-size:13px;color:#000"><span style="font-size:12px;position:relative;top:1px">数据块</span></div>
<div style="position:absolute;left:32px;top:298px;width:13px;height:1px;background:repeating-linear-gradient(to right,#7a7a7a 0 1px,transparent 1px 2px)"></div>
<svg style="position:absolute;left:45px;top:290px" width="17" height="17"><path d="M1.5 1.5H9L12.5 5V14.5H1.5Z" fill="#f2f4f8" stroke="#8794aa"/><path d="M3.5 6H6M3.5 8.5H6M3.5 11H6" stroke="#e05050"/><path d="M7 6H11M7 8.5H11" stroke="#4a78d0"/><path d="M7 11H11" stroke="#7ab04a"/></svg>
<div class="t" style="left:66.5px;top:289.27px;line-height:18px;font-size:13px;color:#000"><span style="font-size:12px;position:relative;top:1px">系统块</span></div>
<div style="position:absolute;left:32px;top:316px;width:13px;height:1px;background:repeating-linear-gradient(to right,#7a7a7a 0 1px,transparent 1px 2px)"></div>
<svg style="position:absolute;left:27px;top:312px" width="9" height="9"><rect x="0.5" y="0.5" width="8" height="8" fill="#fff" stroke="#8c8c8c"/><path d="M2 4.5H7" stroke="#000"/><path d="M4.5 2V7" stroke="#000"/></svg>
<svg style="position:absolute;left:45px;top:308px" width="17" height="17"><path d="M1 2.5H6L7.5 4H15.5V13.5H1Z" fill="#e7c25a" stroke="#a58a3a"/><path d="M1 5.5H15.5V13.5H1Z" fill="#f3d77a" stroke="#a58a3a"/><rect x="4" y="6.5" width="9" height="6" fill="#eef2f8" stroke="#8a9ab8"/></svg>
<div class="t" style="left:66.5px;top:307.365px;line-height:18px;font-size:13px;color:#000"><span style="font-size:12px;position:relative;top:1px">交叉引用</span></div>
<div style="position:absolute;left:32px;top:334px;width:13px;height:1px;background:repeating-linear-gradient(to right,#7a7a7a 0 1px,transparent 1px 2px)"></div>
<svg style="position:absolute;left:45px;top:326px" width="17" height="17"><rect x="1.5" y="1.5" width="13" height="9" fill="#6c8c6a" stroke="#222" stroke-width="1.3"/><path d="M3 4H13M3 7H13" stroke="#9cc494"/><path d="M8 11V13M1 14.5H15" stroke="#222" stroke-width="1.6"/></svg>
<div class="t" style="left:66.5px;top:325.46000000000004px;line-height:18px;font-size:13px;color:#000"><span style="font-size:12px;position:relative;top:1px">通信</span></div>
<div style="position:absolute;left:32px;top:352px;width:13px;height:1px;background:repeating-linear-gradient(to right,#7a7a7a 0 1px,transparent 1px 2px)"></div>
<svg style="position:absolute;left:27px;top:348px" width="9" height="9"><rect x="0.5" y="0.5" width="8" height="8" fill="#fff" stroke="#8c8c8c"/><path d="M2 4.5H7" stroke="#000"/><path d="M4.5 2V7" stroke="#000"/></svg>
<svg style="position:absolute;left:45px;top:344px" width="17" height="17"><rect x="0.5" y="3.5" width="15" height="12" fill="#f1cc52" stroke="#a08030"/><path d="M4 5L13 14" stroke="#111" stroke-width="2.2"/><circle cx="2.5" cy="2.5" r="1.2" fill="#fff" stroke="#333" stroke-width=".6"/><circle cx="7" cy="1.8" r="1.1" fill="#fff" stroke="#333" stroke-width=".6"/><circle cx="8" cy="5" r="1" fill="#fff" stroke="#333" stroke-width=".6"/></svg>
<div class="t" style="left:66.5px;top:343.55499999999995px;line-height:18px;font-size:13px;color:#000"><span style="font-size:12px;position:relative;top:1px">向导</span></div>
<div style="position:absolute;left:32px;top:370px;width:13px;height:1px;background:repeating-linear-gradient(to right,#7a7a7a 0 1px,transparent 1px 2px)"></div>
<svg style="position:absolute;left:27px;top:366px" width="9" height="9"><rect x="0.5" y="0.5" width="8" height="8" fill="#fff" stroke="#8c8c8c"/><path d="M2 4.5H7" stroke="#000"/><path d="M4.5 2V7" stroke="#000"/></svg>
<svg style="position:absolute;left:45px;top:362px" width="17" height="17"><path d="M1 2.5H6L7.5 4H15.5V13.5H1Z" fill="#e7c25a" stroke="#a58a3a"/><path d="M1 5.5H15.5V13.5H1Z" fill="#f3d77a" stroke="#a58a3a"/><rect x="4" y="7" width="9" height="5" fill="#eef2f8" stroke="#8a9ab8"/></svg>
<div class="t" style="left:66.5px;top:361.65px;line-height:18px;font-size:13px;color:#000"><span style="font-size:12px;position:relative;top:1px">工具</span></div>
<div style="position:absolute;left:10px;top:388px;width:13px;height:1px;background:repeating-linear-gradient(to right,#7a7a7a 0 1px,transparent 1px 2px)"></div>
<svg style="position:absolute;left:5px;top:384px" width="9" height="9"><rect x="0.5" y="0.5" width="8" height="8" fill="#fff" stroke="#8c8c8c"/><path d="M2 4.5H7" stroke="#000"/><path d="M4.5 2V7" stroke="#000"/></svg>
<svg style="position:absolute;left:23px;top:380px" width="17" height="17"><path d="M1 2.5H6L7.5 4H15.5V13.5H1Z" fill="#e7c25a" stroke="#a58a3a"/><path d="M1 5.5H15.5V13.5H1Z" fill="#f3d77a" stroke="#a58a3a"/><rect x="4" y="6.5" width="9" height="6" fill="#d8c98a" stroke="#6a5a2a"/></svg>
<div class="t" style="left:44.5px;top:379.745px;line-height:18px;font-size:13px;color:#000"><span style="font-size:12px;position:relative;top:1px">指令</span></div>
</div>
<svg style="position:absolute;left:5px;top:994px" width="10" height="13" viewBox="0 0 10 13"><path d="M7.5 1.5L2.5 6.5L7.5 11.5" stroke="#555" stroke-width="1.6" fill="none"/></svg>
<svg style="position:absolute;left:226px;top:994px" width="10" height="13" viewBox="0 0 10 13"><path d="M2.5 1.5L7.5 6.5L2.5 11.5" stroke="#555" stroke-width="1.6" fill="none"/></svg>
<svg style="position:absolute;left:227px;top:179px" width="10" height="13" viewBox="0 0 10 13"><path d="M2.5 1.5H7.5V7H9V8H1V7H2.5Z" fill="none" stroke="#333"/><path d="M5 8V12" stroke="#333"/><path d="M6 2V7" stroke="#333"/></svg>
<svg style="position:absolute;left:255px;top:178px" width="20" height="20" viewBox="0 0 20 20"><defs><radialGradient id="gr" cx=".4" cy=".35" r=".7"><stop offset="0" stop-color="#8fe070"/><stop offset="1" stop-color="#1f8a1f"/></radialGradient></defs><circle cx="10" cy="10" r="9" fill="url(#gr)"/><path d="M7.5 5.5L14 10L7.5 14.5Z" fill="#fff"/></svg>
<svg style="position:absolute;left:283px;top:178px" width="20" height="20" viewBox="0 0 20 20"><defs><radialGradient id="rr" cx=".4" cy=".35" r=".7"><stop offset="0" stop-color="#ff9a70"/><stop offset="1" stop-color="#c8300c"/></radialGradient></defs><circle cx="10" cy="10" r="9" fill="url(#rr)"/><rect x="6" y="6" width="8" height="8" fill="#fff"/></svg>
<svg style="position:absolute;left:311px;top:177px" width="21" height="21" viewBox="0 0 21 21"><path d="M1.5 3.5H10V13.5H1.5Z" fill="#f0f3f8" stroke="#7a8aa6"/><path d="M6.5 8.5H15V19.5H6.5Z" fill="#f4f6fa" stroke="#7a8aa6"/><path d="M4 10L9 15L19 2" stroke="#3cae3c" stroke-width="2.6" fill="none"/></svg>
<div style="position:absolute;left:339px;top:179px;width:1px;height:18px;background:#4a4a4a;box-shadow:1px 0 0 #f0f0f0"></div>
<svg style="position:absolute;left:350px;top:177px" width="20" height="22" viewBox="0 0 20 22"><path d="M10 1L19 10H14V21H6V10H1Z" fill="#4aa0e8" stroke="#2a6ab8"/></svg>
<div class="t ls" style="left:372.5px;top:178.3px;line-height:19px;font-size:14px;color:#000;">上传</div>
<svg style="position:absolute;left:409px;top:186px" width="8" height="5" viewBox="0 0 8 5"><path d="M0.5 0.5H7.5L4 4.5Z" fill="#666"/></svg>
<svg style="position:absolute;left:426px;top:177px" width="20" height="22" viewBox="0 0 20 22"><path d="M10 21L19 11H14V1H6V11H1Z" fill="#3cb43c" stroke="#1f8a1f"/></svg>
<div class="t ls" style="left:449px;top:178.3px;line-height:19px;font-size:14px;color:#000;">下载</div>
<svg style="position:absolute;left:486px;top:186px" width="8" height="5" viewBox="0 0 8 5"><path d="M0.5 0.5H7.5L4 4.5Z" fill="#666"/></svg>
<div style="position:absolute;left:501px;top:179px;width:1px;height:18px;background:#4a4a4a;box-shadow:1px 0 0 #f0f0f0"></div>
<svg style="position:absolute;left:510px;top:178px" width="22" height="20" viewBox="0 0 22 20"><path d="M2 1V19M2 15H4M5 12V18M8 12V18M9 13L11 15L9 17M13 12Q15 15 13 18" stroke="#8a8f98" fill="none"/><path d="M9 5L14 1V3H19V7H14V9Z" fill="#7cc46a" opacity=".8"/></svg>
<div class="t ls" style="left:534px;top:178.3px;line-height:19px;font-size:14px;color:#9a9ea5;">插入</div>
<svg style="position:absolute;left:575px;top:186px" width="8" height="5" viewBox="0 0 8 5"><path d="M0.5 0.5H7.5L4 4.5Z" fill="#666"/></svg>
<svg style="position:absolute;left:588px;top:178px" width="22" height="20" viewBox="0 0 22 20"><path d="M1.5 1V19M1.5 4H4M5 1V7M8 1V7M9 2L11 4L9 6M13 1Q15 4 13 7" stroke="#777" fill="none"/><path d="M10 9L19 18M19 9L10 18" stroke="#e04040" stroke-width="2.4"/></svg>
<div class="t ls" style="left:611px;top:178.3px;line-height:19px;font-size:14px;color:#9a9ea5;">删除</div>
<svg style="position:absolute;left:651px;top:186px" width="8" height="5" viewBox="0 0 8 5"><path d="M0.5 0.5H7.5L4 4.5Z" fill="#666"/></svg>
<div style="position:absolute;left:663px;top:179px;width:1px;height:18px;background:#4a4a4a;box-shadow:1px 0 0 #f0f0f0"></div>
<svg style="position:absolute;left:670px;top:177px" width="20" height="21" viewBox="0 0 20 21"><rect x="5" y="2" width="14" height="14" fill="#eef3fb" stroke="#3a6ac0"/><rect x="5" y="2" width="14" height="2.5" fill="#3a6ac0"/><path d="M1 3H6V7H1ZM6 8H11V12H6ZM11 12H16V16H11Z" fill="#fff" stroke="#2a4a9a"/><path d="M1 13V20L5 16.5Z" fill="#3caa3c"/></svg>
<svg style="position:absolute;left:698px;top:177px" width="20" height="21" viewBox="0 0 20 21"><g opacity=".55"><rect x="5" y="2" width="14" height="14" fill="#eef3fb" stroke="#3a6ac0"/><rect x="5" y="2" width="14" height="2.5" fill="#3a6ac0"/><path d="M1 3H6V7H1ZM6 8H11V12H6ZM11 12H16V16H11Z" fill="#fff" stroke="#2a4a9a"/><path d="M1.5 13V20M4 13V20" stroke="#3a6ac0" stroke-width="1.5"/></g></svg>
<div style="position:absolute;left:727px;top:179px;width:1px;height:18px;background:#4a4a4a;box-shadow:1px 0 0 #f0f0f0"></div>
<svg style="position:absolute;left:735px;top:179px" width="20" height="18" viewBox="0 0 20 18"><rect x="1" y="4" width="17" height="11" rx="3" fill="#d5e0f2" stroke="#9fb3d6"/></svg>
<svg style="position:absolute;left:762px;top:178px" width="21" height="20" viewBox="0 0 21 20"><rect x="4" y="7" width="16" height="11" rx="3" fill="#d5e0f2" stroke="#9fb3d6"/><path d="M16 6H8V2.5L1.5 6.5L8 10.5V9H16Z" fill="#87a6dc" stroke="#6a8cc8"/></svg>
<svg style="position:absolute;left:790px;top:178px" width="21" height="20" viewBox="0 0 21 20"><rect x="1" y="7" width="16" height="11" rx="3" fill="#d5e0f2" stroke="#9fb3d6"/><path d="M5 6H13V2.5L19.5 6.5L13 10.5V9H5Z" fill="#87a6dc" stroke="#6a8cc8"/></svg>
<svg style="position:absolute;left:818px;top:177px" width="21" height="21" viewBox="0 0 21 21"><rect x="4" y="9" width="16" height="11" rx="3" fill="#d5e0f2" stroke="#9fb3d6"/><rect x="2" y="7" width="16" height="11" rx="3" fill="#dde6f4" stroke="#9fb3d6"/><path d="M3 1L10 8M10 1L3 8" stroke="#e04a40" stroke-width="2"/></svg>
<div style="position:absolute;left:847px;top:179px;width:1px;height:18px;background:#4a4a4a;box-shadow:1px 0 0 #f0f0f0"></div>
<svg style="position:absolute;left:855px;top:178px" width="20" height="20" viewBox="0 0 20 20"><rect x="1" y="1" width="18" height="18" rx="2" fill="#2fa83a" stroke="#1a7a22"/><path d="M4 10H14M10 5.5L14.5 10L10 14.5" stroke="#fff" stroke-width="2.2" fill="none"/></svg>
<div style="position:absolute;left:883px;top:179px;width:1px;height:18px;background:#4a4a4a;box-shadow:1px 0 0 #f0f0f0"></div>
<svg style="position:absolute;left:891px;top:178px" width="21" height="20" viewBox="0 0 21 20"><g opacity=".75"><path d="M5 9V6A4 4 0 0 1 13 6V9" fill="none" stroke="#9a9a9a" stroke-width="1.8"/><rect x="2.5" y="9.5" width="13" height="9" fill="#e8c25a" stroke="#a4822e"/><path d="M9 12V16" stroke="#5a4a1a" stroke-width="1.5"/></g></svg>
<svg style="position:absolute;left:919px;top:178px" width="21" height="20" viewBox="0 0 21 20"><g opacity=".75"><path d="M5 9V6A4 4 0 0 1 13 6" fill="none" stroke="#9a9a9a" stroke-width="1.8"/><rect x="2.5" y="9.5" width="13" height="9" fill="#e8c25a" stroke="#a4822e"/><path d="M9 12V16" stroke="#5a4a1a" stroke-width="1.5"/></g></svg>
<svg style="position:absolute;left:947px;top:178px" width="21" height="20" viewBox="0 0 21 20"><g opacity="1"><path d="M5 9V6A4 4 0 0 1 13 6V9" fill="none" stroke="#9a9a9a" stroke-width="1.8"/><rect x="2.5" y="9.5" width="13" height="9" fill="#e8c25a" stroke="#a4822e"/><path d="M9 12V16" stroke="#5a4a1a" stroke-width="1.5"/></g><path d="M17 1V7M14 4H20" stroke="#3a62b8" stroke-width="1.6"/></svg>
<div style="position:absolute;left:975px;top:179px;width:1px;height:18px;background:#4a4a4a;box-shadow:1px 0 0 #f0f0f0"></div>
<svg style="position:absolute;left:983px;top:178px" width="21" height="20" viewBox="0 0 21 20"><path d="M3 2V17M3 5H15M12 2L15 5L12 8M6 15H15M12 12L15 15L12 18" stroke="#6f97d8" stroke-width="1.6" fill="none"/></svg>
<svg style="position:absolute;left:1011px;top:178px" width="21" height="20" viewBox="0 0 21 20"><path d="M2 7H19M10 7V17M7 14L10 17L13 14" stroke="#6f97d8" stroke-width="1.6" fill="none"/></svg>
<svg style="position:absolute;left:1039px;top:178px" width="21" height="20" viewBox="0 0 21 20"><path d="M2 11H19M10 11V2M7 5L10 2L13 5" stroke="#6f97d8" stroke-width="1.6" fill="none"/></svg>
<svg style="position:absolute;left:1067px;top:178px" width="21" height="20" viewBox="0 0 21 20"><path d="M1 10H19M15 6L19 10L15 14" stroke="#6f97d8" stroke-width="1.6" fill="none"/></svg>
<div style="position:absolute;left:1095px;top:179px;width:1px;height:18px;background:#4a4a4a;box-shadow:1px 0 0 #f0f0f0"></div>
<svg style="position:absolute;left:1102px;top:178px" width="21" height="20" viewBox="0 0 21 20"><path d="M1 10H8M13 10H20M8 3V17M13 3V17" stroke="#6f97d8" stroke-width="1.6" fill="none"/></svg>
<svg style="position:absolute;left:1131px;top:178px" width="21" height="20" viewBox="0 0 21 20"><path d="M1 10H5M16 10H20M8 3Q4 10 8 17M13 3Q17 10 13 17" stroke="#6f97d8" stroke-width="1.6" fill="none"/></svg>
<svg style="position:absolute;left:1159px;top:178px" width="21" height="20" viewBox="0 0 21 20"><path d="M1 10H8M8.8 2.8H17.2V17.2H8.8Z" stroke="#6f97d8" stroke-width="1.6" fill="none"/></svg>
<div style="position:absolute;left:1187px;top:179px;width:1px;height:18px;background:#4a4a4a;box-shadow:1px 0 0 #f0f0f0"></div>
<svg style="position:absolute;left:1195px;top:179px" width="22" height="18" viewBox="0 0 22 18"><path d="M6 2.5H18Q20 2.5 20 4.5V13.5Q20 15.5 18 15.5H6L1.5 9Z" fill="#dfe8f8" stroke="#4a5f94" stroke-width="1.4"/><circle cx="6" cy="9" r="1.4" fill="#2a3a66"/></svg>
<svg style="position:absolute;left:1224px;top:186px" width="8" height="5" viewBox="0 0 8 5"><path d="M0.5 0.5H7.5L4 4.5Z" fill="#666"/></svg>
<svg style="position:absolute;left:1237px;top:177px" width="22" height="21" viewBox="0 0 22 21"><path d="M1 4H4M4 1V7M8 1V7M9 4L11 2M9 4L11 6M14 1V7M17 2Q19 4 17 6" stroke="#555" fill="none"/><rect x="1" y="10" width="20" height="10" fill="#7aa0dc"/><path d="M1 15H21M7.5 10V20M14 10V20" stroke="#eef2fa"/></svg>
<svg style="position:absolute;left:1265px;top:177px" width="21" height="21" viewBox="0 0 21 21"><path d="M1.5 4.5H13V19.5H1.5Z" fill="#f2f4f8" stroke="#8a93a4"/><path d="M4 8H10M4 11H10M4 14H9" stroke="#9aa3b3"/><path d="M10 12L18 2L20 4L12 13.5L9.5 14.5Z" fill="#e7b98a" stroke="#a07850"/></svg>
<svg style="position:absolute;left:1293px;top:177px" width="22" height="21" viewBox="0 0 22 21"><path d="M1.5 2V20M1.5 17H3.5M4.5 14V20M7.5 14V20M8.5 15L10.5 17L8.5 19M12.5 14Q14.5 17 12.5 20" stroke="#777" fill="none"/><path d="M4.5 2H13V11H4.5Z" fill="#f2f4f8" stroke="#8a93a4"/><path d="M11 12L19 2L21 4L13 13.5L10.5 14.5Z" fill="#e7b98a" stroke="#a07850"/></svg>
<div style="position:absolute;left:1322px;top:179px;width:1px;height:18px;background:#4a4a4a;box-shadow:1px 0 0 #f0f0f0"></div>
<svg style="position:absolute;left:1330px;top:177px" width="21" height="21" viewBox="0 0 21 21"><path d="M2.5 4.5H12V19.5H2.5Z" fill="#f2f4f8" stroke="#9aa3b3"/><circle cx="14" cy="6" r="4.5" fill="#f0c040" stroke="#b08a20"/><path d="M11 9L5 17M6.5 15L8.5 17M8 13L10 15" stroke="#c49a28" stroke-width="2"/></svg>
<svg style="position:absolute;left:1357px;top:177px" width="21" height="21" viewBox="0 0 21 21"><rect x="2.5" y="6.5" width="14" height="13" fill="#f4f6fa" stroke="#51607a"/><path d="M3 10H16M3 13.5H16M3 17H16M8 7V19" stroke="#7f93b8"/><path d="M3 6L9 1L19 4L13 9Z" fill="#d9c24a" stroke="#8d7a22"/><path d="M15 1L19 4L18 7" fill="#4caf50"/></svg>
<svg style="position:absolute;left:255px;top:211px" width="9" height="13" viewBox="0 0 9 13"><path d="M7.5 1L1.5 6.5L7.5 12Z" fill="none" stroke="#666" stroke-width="1.2"/></svg>
<svg style="position:absolute;left:545px;top:205px" width="70" height="28" viewBox="0 0 70 28"><defs><linearGradient id="tg4" x1="0" y1="0" x2="0" y2="1"><stop offset="0" stop-color="#e9f3d8"/><stop offset=".48" stop-color="#dde9c6"/><stop offset=".55" stop-color="#cad9ad"/><stop offset="1" stop-color="#c2d3a2"/></linearGradient></defs><path d="M0 28V3Q0 1 2 1H66Q68.5 1 68.5 3.5V28Z" fill="url(#tg4)" stroke="#b6c29c"/><path d="M68.5 3.5V28" stroke="#555"/></svg>
<svg style="position:absolute;left:268px;top:205px" width="90" height="28" viewBox="0 0 90 28"><defs><linearGradient id="tg1" x1="0" y1="0" x2="0" y2="1"><stop offset="0" stop-color="#f2f8fd"/><stop offset=".45" stop-color="#e3edf9"/><stop offset=".55" stop-color="#cbd9f1"/><stop offset="1" stop-color="#c0d0ee"/></linearGradient></defs><path d="M1 28L27 1H84Q87 1 87 4V28" fill="url(#tg1)" stroke="#9aa6bc" stroke-width="1"/><path d="M2 27.5L27 1.5" stroke="#4a4e58" stroke-width="1.1"/><path d="M3.5 27.5L28 2" stroke="#fff" stroke-width=".8" opacity=".8"/></svg>
<svg style="position:absolute;left:355px;top:205px" width="85" height="28" viewBox="0 0 85 28"><defs><linearGradient id="tg2" x1="0" y1="0" x2="0" y2="1"><stop offset="0" stop-color="#fff7a8"/><stop offset=".48" stop-color="#fdeb92"/><stop offset=".55" stop-color="#fbd87c"/><stop offset="1" stop-color="#f8d27a"/></linearGradient></defs><path d="M0.5 28V3Q0.5 1 3 1H82L56 28Z" fill="url(#tg2)" stroke="#c9b47a"/></svg>
<svg style="position:absolute;left:412px;top:205px" width="140" height="30" viewBox="0 0 140 30"><defs><linearGradient id="tg3" x1="0" y1="0" x2="0" y2="1"><stop offset="0" stop-color="#fde2c4"/><stop offset=".45" stop-color="#fad3ac"/><stop offset=".52" stop-color="#f5b68a"/><stop offset="1" stop-color="#f3ae80"/></linearGradient></defs><path d="M1 30L27 1H134Q137.5 1 137.5 4V30" fill="url(#tg3)" stroke="#c7a184"/><path d="M1.5 29L27 1.5" stroke="#4a4e58" stroke-width="1.1"/><path d="M3 29L28 2" stroke="#fff" stroke-width=".8" opacity=".8"/></svg>
<div class="t ls" style="left:308px;top:210.5px;line-height:18px;font-size:13.5px;color:#111;">MAIN</div>
<div class="t ls" style="left:374.5px;top:210.5px;line-height:18px;font-size:13.5px;color:#111;">Cylinder</div>
<div class="t ls" style="left:456px;top:209.0px;line-height:21px;font-size:15px;color:#000;font-weight:bold">气缸调用</div>
<svg style="position:absolute;left:530px;top:213px" width="12" height="12" viewBox="0 0 12 12"><path d="M1.5 1.5L10.5 10.5M10.5 1.5L1.5 10.5" stroke="#555" stroke-width="1.6"/></svg>
<div class="t ls" style="left:567.5px;top:210.5px;line-height:18px;font-size:13.5px;color:#111;">INT_0</div>
<div style="position:absolute;left:252px;top:236px;width:23px;height:600px;background:repeating-conic-gradient(#a8a8a8 0 25%,#fafafa 0 50%) 0 0/2px 2px"></div>
<div style="position:absolute;left:278px;top:236px;width:2px;height:600px;background:#000"></div>
<div class="t ls" style="left:253.0px;top:238.0px;width:20px;text-align:center;line-height:18px;font-size:13px;color:#000;font-weight:bold">1</div>
<div class="t ls" style="left:286px;top:241.0px;line-height:16px;font-size:12px;color:#108010;">气缸调用</div>
<div class="t" style="left:283.5px;top:266.5px;line-height:18px;font-size:13px;color:#000">Always<span style="position:relative;top:-3px">~</span>:SM0.0</div>
<div style="position:absolute;left:280px;top:295px;width:31px;height:2px;background:#000"></div>
<div style="position:absolute;left:310px;top:285px;width:2px;height:23px;background:#000"></div>
<div style="position:absolute;left:347px;top:285px;width:2px;height:23px;background:#000"></div>
<div style="position:absolute;left:348px;top:295px;width:437px;height:2px;background:#000"></div>
<div class="t" style="left:283px;top:329.5px;line-height:18px;font-size:13px;color:#000">Clock_1s:SM0.5</div>
<div style="position:absolute;left:280px;top:358px;width:31px;height:2px;background:#000"></div>
<div style="position:absolute;left:310px;top:348px;width:2px;height:23px;background:#000"></div>
<div style="position:absolute;left:347px;top:348px;width:2px;height:23px;background:#000"></div>
<div style="position:absolute;left:348px;top:358px;width:63px;height:2px;background:#000"></div>
<div style="position:absolute;left:410px;top:348px;width:2px;height:23px;background:#000"></div>
<div style="position:absolute;left:447px;top:348px;width:2px;height:23px;background:#000"></div>
<div style="position:absolute;left:448px;top:358px;width:337px;height:2px;background:#000"></div>
<div class="t ls" style="left:420.0px;top:350.0px;width:20px;text-align:center;line-height:18px;font-size:13px;color:#000;">P</div>
<div class="t" style="left:290.5px;top:392.5px;line-height:18px;font-size:13px;color:#000"><span style="font-size:13px">初始化</span>:V100.0</div>
<div style="position:absolute;left:280px;top:421px;width:31px;height:2px;background:#000"></div>
<div style="position:absolute;left:310px;top:411px;width:2px;height:23px;background:#000"></div>
<div style="position:absolute;left:347px;top:411px;width:2px;height:23px;background:#000"></div>
<div style="position:absolute;left:348px;top:421px;width:63px;height:2px;background:#000"></div>
<div style="position:absolute;left:410px;top:411px;width:2px;height:23px;background:#000"></div>
<div style="position:absolute;left:447px;top:411px;width:2px;height:23px;background:#000"></div>
<div style="position:absolute;left:448px;top:421px;width:337px;height:2px;background:#000"></div>
<div class="t ls" style="left:420.0px;top:413.0px;width:20px;text-align:center;line-height:18px;font-size:13px;color:#000;">P</div>
<div class="t" style="left:287px;top:455.5px;line-height:18px;font-size:13px;color:#000"><span style="font-size:13px">手动模式</span>:V10.0</div>
<div class="t" style="left:384.5px;top:455.5px;line-height:18px;font-size:13px;color:#000"><span style="font-size:13px">允许手动</span>:V120.0</div>
<div class="t" style="left:496.5px;top:455.5px;line-height:18px;font-size:13px;color:#000"><span style="font-size:13px">手动</span>:V110.0</div>
<div style="position:absolute;left:280px;top:484px;width:31px;height:2px;background:#000"></div>
<div style="position:absolute;left:310px;top:474px;width:2px;height:23px;background:#000"></div>
<div style="position:absolute;left:347px;top:474px;width:2px;height:23px;background:#000"></div>
<div style="position:absolute;left:348px;top:484px;width:63px;height:2px;background:#000"></div>
<div style="position:absolute;left:410px;top:474px;width:2px;height:23px;background:#000"></div>
<div style="position:absolute;left:447px;top:474px;width:2px;height:23px;background:#000"></div>
<div style="position:absolute;left:448px;top:484px;width:63px;height:2px;background:#000"></div>
<div style="position:absolute;left:510px;top:474px;width:2px;height:23px;background:#000"></div>
<div style="position:absolute;left:547px;top:474px;width:2px;height:23px;background:#000"></div>
<div style="position:absolute;left:548px;top:484px;width:63px;height:2px;background:#000"></div>
<div style="position:absolute;left:610px;top:474px;width:2px;height:23px;background:#000"></div>
<div style="position:absolute;left:647px;top:474px;width:2px;height:23px;background:#000"></div>
<div style="position:absolute;left:648px;top:484px;width:137px;height:2px;background:#000"></div>
<div class="t ls" style="left:619.0px;top:476.0px;width:20px;text-align:center;line-height:18px;font-size:13px;color:#000;">P</div>
<div class="t" style="left:294.5px;top:518.5px;line-height:18px;font-size:13px;color:#000"><span style="font-size:13px">气缸原点</span>:I5.0</div>
<div style="position:absolute;left:280px;top:547px;width:31px;height:2px;background:#000"></div>
<div style="position:absolute;left:310px;top:537px;width:2px;height:23px;background:#000"></div>
<div style="position:absolute;left:347px;top:537px;width:2px;height:23px;background:#000"></div>
<div style="position:absolute;left:348px;top:547px;width:437px;height:2px;background:#000"></div>
<div class="t" style="left:294.5px;top:581.5px;line-height:18px;font-size:13px;color:#000"><span style="font-size:13px">气缸动点</span>:I5.1</div>
<div style="position:absolute;left:280px;top:610px;width:31px;height:2px;background:#000"></div>
<div style="position:absolute;left:310px;top:600px;width:2px;height:23px;background:#000"></div>
<div style="position:absolute;left:347px;top:600px;width:2px;height:23px;background:#000"></div>
<div style="position:absolute;left:348px;top:610px;width:437px;height:2px;background:#000"></div>
<div class="t" style="left:284.5px;top:644.5px;line-height:18px;font-size:13px;color:#000"><span style="font-size:13px">气缸复位</span>:V110.1</div>
<div style="position:absolute;left:280px;top:673px;width:31px;height:2px;background:#000"></div>
<div style="position:absolute;left:310px;top:663px;width:2px;height:23px;background:#000"></div>
<div style="position:absolute;left:347px;top:663px;width:2px;height:23px;background:#000"></div>
<div style="position:absolute;left:348px;top:673px;width:437px;height:2px;background:#000"></div>
<div style="position:absolute;left:784px;top:265px;width:93px;height:2px;background:#000"></div>
<div style="position:absolute;left:784px;top:265px;width:2px;height:571px;background:#000"></div>
<div style="position:absolute;left:875px;top:265px;width:2px;height:571px;background:#000"></div>
<div class="t ls" style="left:790.5px;top:266.0px;width:80px;text-align:center;line-height:18px;font-size:13px;color:#000;">Cylinder</div>
<div class="t" style="left:788px;top:287px;line-height:18px;font-size:13px;color:#000">EN</div>
<div class="t" style="left:788px;top:351px;line-height:18px;font-size:13px;color:#000">i<span style="font-size:13px">一秒</span><span style="position:relative;top:-3px">~</span></div>
<div class="t" style="left:788px;top:414px;line-height:18px;font-size:13px;color:#000">i<span style="font-size:13px">初始化</span></div>
<div class="t" style="left:788px;top:477px;line-height:18px;font-size:13px;color:#000">i<span style="font-size:13px">手动</span><span style="position:relative;top:-3px">~</span></div>
<div class="t" style="left:788px;top:540px;line-height:18px;font-size:13px;color:#000">i<span style="font-size:13px">气缸</span><span style="position:relative;top:-3px">~</span></div>
<div class="t" style="left:788px;top:603px;line-height:18px;font-size:13px;color:#000">i<span style="font-size:13px">气缸</span><span style="position:relative;top:-3px">~</span></div>
<div class="t" style="left:788px;top:666px;line-height:18px;font-size:13px;color:#000">i<span style="font-size:13px">复位</span></div>
<div style="position:absolute;left:779px;top:715px;width:5px;height:2px;background:#000"></div>
<div class="t" style="left:478px;top:707px;width:300px;text-align:right;line-height:18px;font-size:13px;color:#808000">5</div>
<div class="t" style="left:788px;top:708px;line-height:18px;font-size:13px;color:#000">i<span style="font-size:13px">报警</span><span style="position:relative;top:-3px">~</span></div>
<div style="position:absolute;left:779px;top:736.5px;width:5px;height:2px;background:#000"></div>
<div class="t" style="left:478px;top:728.5px;width:300px;text-align:right;line-height:18px;font-size:13px;color:#000"><span style="font-size:13px">自动出</span>:V130.0</div>
<div class="t" style="left:788px;top:728.5px;line-height:18px;font-size:13px;color:#000">io<span style="font-size:13px">自</span><span style="position:relative;top:-3px">~</span></div>
<div style="position:absolute;left:779px;top:757.5px;width:5px;height:2px;background:#000"></div>
<div class="t" style="left:478px;top:749.5px;width:300px;text-align:right;line-height:18px;font-size:13px;color:#000"><span style="font-size:13px">自动回</span>:V140.0</div>
<div class="t" style="left:788px;top:749.5px;line-height:18px;font-size:13px;color:#000">io<span style="font-size:13px">自</span><span style="position:relative;top:-3px">~</span></div>
<div style="position:absolute;left:779px;top:778.5px;width:5px;height:2px;background:#000"></div>
<div class="t" style="left:478px;top:770.5px;width:300px;text-align:right;line-height:18px;font-size:13px;color:#000"><span style="font-size:13px">手动中</span>:V150.0</div>
<div class="t" style="left:788px;top:770.5px;line-height:18px;font-size:13px;color:#000">io<span style="font-size:13px">手</span><span style="position:relative;top:-3px">~</span></div>
<div style="position:absolute;left:779px;top:799.5px;width:5px;height:2px;background:#000"></div>
<div class="t" style="left:478px;top:791.5px;width:300px;text-align:right;line-height:18px;font-size:13px;color:#000"><span style="font-size:13px">出报警</span>:V160.0</div>
<div class="t" style="left:788px;top:791.5px;line-height:18px;font-size:13px;color:#000">io<span style="font-size:13px">出</span><span style="position:relative;top:-3px">~</span></div>
<div style="position:absolute;left:779px;top:820.5px;width:5px;height:2px;background:#000"></div>
<div class="t" style="left:478px;top:812.5px;width:300px;text-align:right;line-height:18px;font-size:13px;color:#000"><span style="font-size:13px">回报警</span>:V170.0</div>
<div class="t" style="left:788px;top:812.5px;line-height:18px;font-size:13px;color:#000">io<span style="font-size:13px">回</span><span style="position:relative;top:-3px">~</span></div>
<div style="position:absolute;left:1380px;top:705px;width:100px;height:62px;box-sizing:border-box;border:1px dotted #000"></div>
<svg style="position:absolute;left:257px;top:840px" width="10" height="13" viewBox="0 0 10 13"><path d="M7.5 1.5L2.5 6.5L7.5 11.5" stroke="#555" stroke-width="1.6" fill="none"/></svg>
<svg style="position:absolute;left:1878px;top:840px" width="10" height="13" viewBox="0 0 10 13"><path d="M2.5 1.5L7.5 6.5L2.5 11.5" stroke="#555" stroke-width="1.6" fill="none"/></svg>
<svg style="position:absolute;left:1884px;top:879px" width="10" height="13" viewBox="0 0 10 13"><path d="M2.5 1.5H7.5V7H9V8H1V7H2.5Z" fill="none" stroke="#333"/><path d="M5 8V12" stroke="#333"/><path d="M6 2V7" stroke="#333"/></svg>
<svg style="position:absolute;left:255px;top:910px" width="22" height="20" viewBox="0 0 22 20"><path d="M1 2H15M1 5H15M1 8H13M1 11H10M1 14H10" stroke="#8a96aa" stroke-width="1.6"/><path d="M9 9L18 18M18 9L9 18" stroke="#e83a30" stroke-width="2.4"/></svg>
<svg style="position:absolute;left:287px;top:908px" width="15" height="21" viewBox="0 0 15 21"><path d="M1.5 1.5H9L13.5 6V19.5H1.5Z" fill="#eef1f6" stroke="#9aa3b3"/><path d="M7.5 8L12 12.5H9.5V18H5.5V12.5H3Z" fill="#78c070" stroke="#4a9a44"/></svg>
<div style="position:absolute;left:249px;top:934px;width:1647px;height:1px;background:#c8d3e6"></div>
<svg style="position:absolute;left:255px;top:958px" width="10" height="13" viewBox="0 0 10 13"><path d="M1.5 1V12" stroke="#666" stroke-width="1.6"/><path d="M8.5 1.5L3 6.5L8.5 11.5Z" fill="#666"/></svg>
<svg style="position:absolute;left:274px;top:958px" width="8" height="13" viewBox="0 0 8 13"><path d="M6.5 1.5L1 6.5L6.5 11.5Z" fill="#666"/></svg>
<svg style="position:absolute;left:294px;top:958px" width="8" height="13" viewBox="0 0 8 13"><path d="M1.5 1.5L7 6.5L1.5 11.5Z" fill="#666"/></svg>
<svg style="position:absolute;left:310px;top:958px" width="10" height="13" viewBox="0 0 10 13"><path d="M8.5 1V12" stroke="#666" stroke-width="1.6"/><path d="M1.5 1.5L7 6.5L1.5 11.5Z" fill="#666"/></svg>
<svg style="position:absolute;left:324px;top:951px" width="60" height="28" viewBox="0 0 60 28"><path d="M1.5 0.5L15 26.5H44L57.5 0.5" fill="#fff" stroke="#444"/><path d="M0 0.5H60" stroke="#fff"/></svg>
<div style="position:absolute;left:247px;top:951px;width:78px;height:1px;background:#555"></div>
<div style="position:absolute;left:383px;top:951px;width:1513px;height:1px;background:#555"></div>
<div class="t ls" style="left:335px;top:954.5px;line-height:21px;font-size:15px;color:#000;font-weight:bold">组建</div>
<div style="position:absolute;left:514px;top:983px;width:90px;height:25px;background:linear-gradient(#e9ecef,#d6dce3);border-radius:2px 2px 6px 6px"></div>
<svg style="position:absolute;left:254px;top:988px" width="18" height="18" viewBox="0 0 18 18"><rect x="1" y="1.5" width="16" height="15" fill="#e9f0fb" stroke="#6c84b4"/><rect x="1" y="1.5" width="16" height="3" fill="#5d8ad8"/><path d="M6 7H14Q15 7 15 8V12Q15 13.5 14 13.5H6L3 10Z" fill="#d3e0f5" stroke="#5a6d9e"/></svg>
<div class="t ls" style="left:275px;top:987.5px;line-height:19px;font-size:14px;color:#e9e9e9;">符号表</div>
<svg style="position:absolute;left:332px;top:988px" width="18" height="18" viewBox="0 0 18 18"><rect x="1" y="1.5" width="16" height="15" fill="#eef2f8" stroke="#6c84b4"/><rect x="1" y="1.5" width="16" height="3" fill="#5d8ad8"/><path d="M3 7H15M3 10H15M3 13H15M7 6V16M11 6V16" stroke="#a9b4c6"/></svg>
<div class="t ls" style="left:353px;top:987.5px;line-height:19px;font-size:14px;color:#e9e9e9;">状态图表</div>
<svg style="position:absolute;left:424px;top:988px" width="18" height="18" viewBox="0 0 18 18"><rect x="1" y="1.5" width="16" height="15" fill="#eef2f8" stroke="#6c84b4"/><rect x="1" y="1.5" width="16" height="3" fill="#5d8ad8"/><path d="M3 7.5H7M10 7.5H14M3 13.5H8" stroke="#e88a50" stroke-width="1.6"/><path d="M3 10.5H9M8 10.5H15" stroke="#4a78d0" stroke-width="1.6"/></svg>
<div class="t ls" style="left:445px;top:987.5px;line-height:19px;font-size:14px;color:#e9e9e9;">交叉引用</div>
<svg style="position:absolute;left:518px;top:988px" width="18" height="18" viewBox="0 0 18 18"><rect x="1" y="1.5" width="16" height="15" fill="#eef2f8" stroke="#6c84b4"/><rect x="1" y="1.5" width="16" height="3" fill="#5d8ad8"/><path d="M4 7L12 14" stroke="#e0a030" stroke-width="2.5"/><path d="M10 9L14 14L8 13Z" fill="#d04030"/></svg>
<div class="t ls" style="left:539px;top:987.5px;line-height:19px;font-size:14px;color:#111;">输出窗口</div>
<svg style="position:absolute;left:610px;top:988px" width="18" height="18" viewBox="0 0 18 18"><rect x="1" y="1.5" width="16" height="15" fill="#eef2f8" stroke="#6c84b4"/><rect x="1" y="1.5" width="16" height="3" fill="#5d8ad8"/><rect x="6" y="7" width="6" height="7" fill="#fff" stroke="#6c84b4"/></svg>
<div class="t ls" style="left:631px;top:987.5px;line-height:19px;font-size:14px;color:#e9e9e9;">变量表</div>
</body></html>
